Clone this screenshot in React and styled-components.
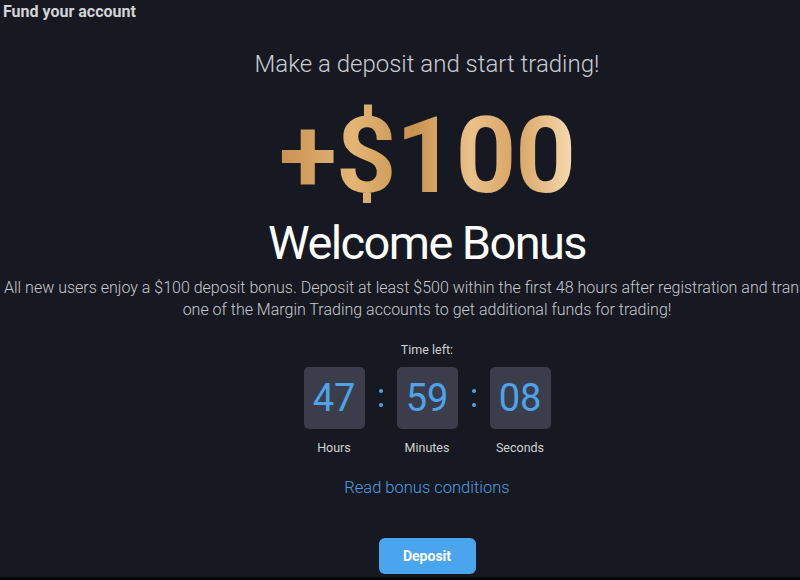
import React from "react";
import styled, { createGlobalStyle } from "styled-components";

const Global = createGlobalStyle`
  html, body { margin: 0; padding: 0; background: #161921; }
  body { font-family: Roboto, "Liberation Sans", sans-serif; }
`;

const Screen = styled.div`
  width: 800px;
  height: 580px;
  overflow: hidden;
  background: #161921;
  display: flex;
  flex-direction: column;
  border-bottom: 3px solid #050608;
  box-sizing: border-box;
`;

const Title = styled.h1`
  margin: 0;
  padding: 2px 0 0 3px;
  font-size: 16px;
  line-height: 20px;
  font-weight: 700;
  color: #d2d4d8;
`;

const Content = styled.div`
  width: 854px;
  flex-shrink: 0;
  display: flex;
  flex-direction: column;
  align-items: center;
  text-align: center;
`;

const Subtitle = styled.div`
  margin-top: 28px;
  font-size: 24px;
  line-height: 28px;
  font-weight: 300;
  color: #c9ccd2;
`;

const Amount = styled.div`
  margin-top: 23px;
  font-size: 106px;
  line-height: 110px;
  font-weight: 700;
  letter-spacing: -1px;
  background: linear-gradient(90deg, #c99150 0%, #e3b676 25%, #c8914e 45%, #e9c189 65%, #d9a463 80%, #f6dcb3 100%);
  -webkit-background-clip: text;
  background-clip: text;
  color: transparent;
`;

const Heading = styled.div`
  margin-top: 4px;
  font-size: 47px;
  line-height: 56px;
  font-weight: 400;
  letter-spacing: -1.6px;
  color: #ffffff;
`;

const Paragraph = styled.p`
  align-self: stretch;
  margin: 6px 0 0;
  padding: 0 4px;
  font-size: 16px;
  line-height: 22px;
  font-weight: 300;
  color: #c6c9cf;
  white-space: nowrap;
`;

const Line = styled.span`
  display: block;
`;

const TimeLabel = styled.div`
  margin-top: 21px;
  font-size: 12.5px;
  line-height: 16px;
  color: #cfd1d5;
`;

const Timer = styled.div`
  margin-top: 9px;
  display: flex;
  align-items: flex-start;
`;

const Unit = styled.div`
  display: flex;
  flex-direction: column;
  align-items: center;
  width: 61px;
`;

const Box = styled.div`
  width: 61px;
  height: 62px;
  border-radius: 5px;
  background: #3b3d4a;
  color: #4da4ea;
  font-size: 38px;
  display: flex;
  align-items: center;
  justify-content: center;
`;

const UnitLabel = styled.div`
  margin-top: 11px;
  font-size: 12.5px;
  line-height: 16px;
  color: #cfd1d5;
`;

const Colon = styled.div`
  width: 32px;
  height: 62px;
  display: flex;
  flex-direction: column;
  align-items: center;
  justify-content: center;
  gap: 10px;
  &::before, &::after {
    content: "";
    width: 4px;
    height: 4px;
    border-radius: 50%;
    background: #4da4ea;
  }
`;

const Link = styled.a`
  margin-top: 22px;
  font-size: 16.5px;
  line-height: 20px;
  font-weight: 300;
  color: #4c9fe0;
  text-decoration: none;
`;

const Button = styled.button`
  margin-top: 40px;
  width: 97px;
  height: 36px;
  border: none;
  border-radius: 6px;
  background: #4aa5ee;
  color: #ffffff;
  font-family: Roboto, "Liberation Sans", sans-serif;
  font-size: 14px;
  font-weight: 700;
`;

const units = [
  ["47", "Hours"],
  ["59", "Minutes"],
  ["08", "Seconds"],
];

export default function App() {
  return (
    <>
      <Global />
      <Screen>
        <Title>Fund your account</Title>
        <Content>
          <Subtitle>Make a deposit and start trading!</Subtitle>
          <Amount>+$100</Amount>
          <Heading>Welcome Bonus</Heading>
          <Paragraph>
            <Line>
              All new users enjoy a $100 deposit bonus. Deposit at least $500 within the first 48 hours after registration and transfer it to
            </Line>
            <Line>one of the Margin Trading accounts to get additional funds for trading!</Line>
          </Paragraph>
          <TimeLabel>Time left:</TimeLabel>
          <Timer>
            {units.map(([v, l], i) => (
              <React.Fragment key={l}>
                {i > 0 && <Colon />}
                <Unit>
                  <Box>{v}</Box>
                  <UnitLabel>{l}</UnitLabel>
                </Unit>
              </React.Fragment>
            ))}
          </Timer>
          <Link href="#">Read bonus conditions</Link>
          <Button>Deposit</Button>
        </Content>
      </Screen>
    </>
  );
}
